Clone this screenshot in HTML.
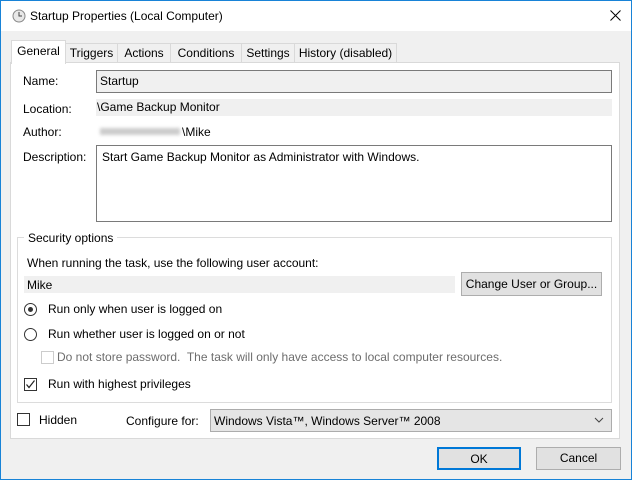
<!DOCTYPE html>
<html><head><style>
*{box-sizing:border-box;margin:0;padding:0}
body{width:632px;height:480px;background:#f0f0f0;font-family:"Liberation Sans",sans-serif;font-size:12px;color:#000;position:relative;overflow:hidden}
.a{position:absolute}
.frame{left:0;top:0;width:632px;height:480px;border:1px solid #1883d7}
.title{left:1px;top:1px;width:630px;height:30px;background:#fff}
.tab{position:absolute;top:43px;height:20px;border:1px solid #d9d9d9;border-bottom:none;background:#f0f0f0;text-align:center;line-height:18px;font-size:12px}
.panel{left:10px;top:62px;width:610px;height:377px;background:#fff;border:1px solid #d9d9d9}
.lbl{position:absolute;font-size:12px}
.btn{position:absolute;background:#e1e1e1;border:1px solid #adadad;text-align:center;font-size:12px}
.chk{position:absolute;width:13px;height:13px;border:1px solid #333;background:#fff}
.rad{position:absolute;width:13px;height:13px;border:1px solid #333;border-radius:50%;background:#fff}
</style></head><body>
<div class="a frame"></div>
<div class="a title"></div>
<svg class="a" style="left:12px;top:9px" width="14" height="14" viewBox="0 0 14 14"><circle cx="7" cy="7" r="6" fill="#e8e8e8" stroke="#888"/><path d="M7 3v4h3" stroke="#444" fill="none"/></svg>
<div class="lbl" style="left:30px;top:9px;font-size:12px">Startup Properties (Local Computer)</div>
<svg class="a" style="left:610px;top:10px" width="11" height="11" viewBox="0 0 11 11"><path d="M0.5 0.5L10.5 10.5M10.5 0.5L0.5 10.5" stroke="#000" stroke-width="1"/></svg>

<div class="tab" style="left:65px;width:53px">Triggers</div>
<div class="tab" style="left:117px;width:54px">Actions</div>
<div class="tab" style="left:170px;width:72px">Conditions</div>
<div class="tab" style="left:241px;width:54px">Settings</div>
<div class="tab" style="left:294px;width:103px">History (disabled)</div>
<div class="a panel"></div>
<div class="tab" style="left:11px;top:40px;width:55px;height:24px;background:#fff;line-height:20px">General</div>

<div class="lbl" style="left:23px;top:74px">Name:</div>
<div class="a" style="left:96px;top:70px;width:516px;height:23px;background:#f0f0f0;border:1px solid #7a7a7a"></div>
<div class="lbl" style="left:100px;top:74px">Startup</div>
<div class="lbl" style="left:23px;top:102px">Location:</div>
<div class="a" style="left:96px;top:99px;width:516px;height:17px;background:#f0f0f0"></div>
<div class="lbl" style="left:97px;top:100px">\Game Backup Monitor</div>
<div class="lbl" style="left:23px;top:125px">Author:</div>
<div class="a" style="left:100px;top:128px;width:80px;height:7px;background:#ccc;filter:blur(1.5px)"></div>
<div class="lbl" style="left:182px;top:125px">\Mike</div>
<div class="lbl" style="left:23px;top:150px">Description:</div>
<div class="a" style="left:96px;top:145px;width:516px;height:77px;background:#fff;border:1px solid #7a7a7a"></div>
<div class="lbl" style="left:102px;top:150px">Start Game Backup Monitor as Administrator with Windows.</div>

<div class="a" style="left:17px;top:237px;width:595px;height:166px;border:1px solid #dcdcdc"></div>
<div class="lbl" style="left:24px;top:231px;background:#fff;padding:0 4px">Security options</div>
<div class="lbl" style="left:27px;top:256px">When running the task, use the following user account:</div>
<div class="a" style="left:24px;top:276px;width:431px;height:17px;background:#f0f0f0"></div>
<div class="lbl" style="left:27px;top:278px">Mike</div>
<div class="btn" style="left:461px;top:272px;width:141px;height:24px;line-height:22px">Change User or Group...</div>
<div class="rad" style="left:24px;top:303px"></div><div class="a" style="left:28px;top:307px;width:5px;height:5px;border-radius:50%;background:#333"></div>
<div class="lbl" style="left:48px;top:302px">Run only when user is logged on</div>
<div class="rad" style="left:24px;top:328px"></div>
<div class="lbl" style="left:48px;top:327px">Run whether user is logged on or not</div>
<div class="chk" style="left:41px;top:351px;border-color:#ccc"></div>
<div class="lbl" style="left:57px;top:350px;color:#6d6d6d">Do not store password.&nbsp; The task will only have access to local computer resources.</div>
<div class="chk" style="left:24px;top:378px"></div>
<svg class="a" style="left:26px;top:380px" width="9" height="9"><path d="M0.5 4.5L3 7.5L8.5 0.5" stroke="#222" fill="none" stroke-width="1.2"/></svg>
<div class="lbl" style="left:48px;top:377px">Run with highest privileges</div>

<div class="chk" style="left:17px;top:413px"></div>
<div class="lbl" style="left:39px;top:413px">Hidden</div>
<div class="lbl" style="left:126px;top:414px">Configure for:</div>
<div class="a" style="left:210px;top:409px;width:402px;height:23px;background:#e5e5e5;border:1px solid #acacac"></div>
<div class="lbl" style="left:214px;top:414px">Windows Vista™, Windows Server™ 2008</div>
<svg class="a" style="left:594px;top:417px" width="10" height="6"><path d="M1 1l4 4 4-4" stroke="#444" fill="none"/></svg>

<div class="btn" style="left:437px;top:447px;width:84px;height:23px;line-height:20px;border:2px solid #0078d7">OK</div>
<div class="btn" style="left:536px;top:447px;width:85px;height:23px;line-height:21px">Cancel</div>
</body></html>
